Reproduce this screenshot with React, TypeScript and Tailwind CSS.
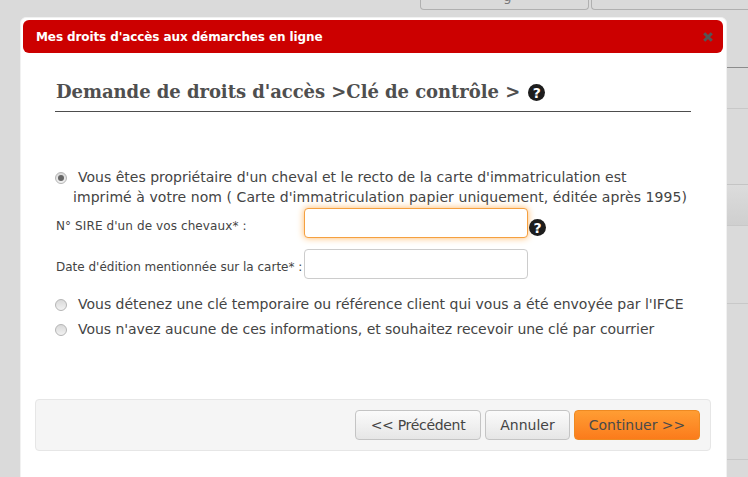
const bodyFont = "font-['DejaVu_Sans',Verdana,sans-serif]";

function HelpIcon() {
  return (
    <span className="flex h-[17px] w-[17px] shrink-0 items-center justify-center rounded-full bg-[#1d1d1d] font-['DejaVu_Sans',sans-serif] text-[14px] leading-none font-bold text-white">
      ?
    </span>
  );
}

function Radio({ checked = false }: { checked?: boolean }) {
  return (
    <span className="flex h-3 w-3 shrink-0 items-center justify-center rounded-full border border-[#b5b5b5] bg-gradient-to-b from-[#d9d9d9] to-[#f2f2f2]">
      {checked && <span className="h-1.5 w-1.5 rounded-full bg-[#666]" />}
    </span>
  );
}

function Backdrop() {
  return (
    <div className="h-[477px] w-[748px] overflow-hidden bg-[#dadada]">
      <div className="flex h-[10px] justify-end gap-[2px]">
        <div className="flex h-[10px] w-[169px] justify-center overflow-hidden rounded-b border border-t-0 border-[#b0b0b0] pl-[6px] text-[13px] leading-none text-[#777]">
          <span className="-mt-[10px]">g</span>
        </div>
        <div className="h-[10px] w-[157px] rounded-bl border border-t-0 border-r-0 border-[#b0b0b0]" />
      </div>
      <div className="ml-auto w-[21px]">
        <div className="mt-[57px] h-[41px] border-t border-[#8c8c8c]" />
        <div className="h-[76px] border-t border-[#c8c8c8]" />
        <div className="h-[41px] border-t border-[#c4c4c4] bg-gradient-to-b from-[#dcdcdc] to-[#cfcfcf]" />
        <div className="h-[78px] border-t border-[#c8c8c8]" />
        <div className="h-[156px] border-t border-[#c8c8c8]" />
        <div className="border-t border-[#c8c8c8]" />
      </div>
    </div>
  );
}

export default function App() {
  return (
    <div className={`relative h-[477px] w-[748px] overflow-hidden ${bodyFont}`}>
      <Backdrop />

      {/* modal */}
      <div className="absolute top-[17px] left-[20px] h-[470px] w-[707px] rounded-t-md border border-[#f1f1f1] bg-white pt-[2px] pr-[3px] pl-[2px]">
        <div className="flex h-[33px] items-center justify-between rounded-md bg-[#cc0000] pr-[10px] pl-[13px]">
          <span className="text-[12px] font-bold tracking-[-0.1px] text-white">Mes droits d'accès aux démarches en ligne</span>
          <svg width="10" height="10" viewBox="0 0 10 10" className="mt-[1px]">
            <path d="M1.2 1.2 8.8 8.8M8.8 1.2 1.2 8.8" stroke="#555" strokeWidth="3" />
          </svg>
        </div>

        <div className="mx-[32px] mt-[24px] flex h-[35px] items-start gap-[8px] border-b border-[#4d4d4d] pt-[2px] pl-[1px] font-['DejaVu_Serif',Georgia,serif] text-[18px] leading-[26px] font-bold tracking-[-0.05px] text-[#4f4f4f]">
          <span>Demande de droits d'accès &gt;Clé de contrôle &gt;</span>
          <span className="mt-[5px]">
            <HelpIcon />
          </span>
        </div>

        <div className="mt-[55px] ml-[32px] text-[14px] text-[#444]">
          <div className="flex items-start gap-[11px] leading-[20px]">
            <span className="mt-[5px]">
              <Radio checked />
            </span>
            <span>Vous êtes propriétaire d'un cheval et le recto de la carte d'immatriculation est</span>
          </div>
          <div className="ml-[18px] leading-[20px] tracking-[0.07px]">
            imprimé à votre nom ( Carte d'immatriculation papier uniquement, éditée après 1995)
          </div>

          <div className="mt-[1px] flex items-center text-[12px]">
            <label className="mt-[5px] ml-[1px] w-[248px] tracking-[0.1px]">N° SIRE d'un de vos chevaux* :</label>
            <input className="h-[30px] w-[224px] rounded border border-[#f5a040] bg-white shadow-[0_0_7px_#ffb866] outline-none" />
            <span className="mt-[9px] ml-[1px]">
              <HelpIcon />
            </span>
          </div>
          <div className="mt-[11px] flex items-center text-[12px]">
            <label className="mt-[5px] ml-[1px] w-[248px]">Date d'édition mentionnée sur la carte* :</label>
            <input className="h-[30px] w-[224px] rounded border border-[#cccccc] bg-white outline-none" />
          </div>

          <div className="mt-[15px] flex items-center gap-[11px] leading-[21px]">
            <Radio />
            <span className="tracking-[-0.01px]">Vous détenez une clé temporaire ou référence client qui vous a été envoyée par l'IFCE</span>
          </div>
          <div className="mt-[4px] flex items-center gap-[11px] leading-[21px]">
            <Radio />
            <span className="tracking-[-0.05px]">Vous n'avez aucune de ces informations, et souhaitez recevoir une clé par courrier</span>
          </div>
        </div>

        <div className="mt-[59px] ml-[12px] flex h-[52px] w-[676px] items-center justify-end gap-[4px] rounded border border-[#e6e6e6] bg-[#f5f5f5] pr-[10px] text-[14px]">
          <button className="h-[30px] w-[126px] rounded border border-[#c4c4c4] bg-gradient-to-b from-[#fbfbfb] to-[#e6e6e6] tracking-[-0.3px] text-[#444]">
            &lt;&lt; Précédent
          </button>
          <button className="h-[30px] w-[85px] rounded border border-[#c4c4c4] bg-gradient-to-b from-[#fbfbfb] to-[#e6e6e6] text-[#444]">
            Annuler
          </button>
          <button className="h-[30px] w-[126px] rounded border border-[#ee8a22] bg-gradient-to-b from-[#ff9d33] to-[#fb7b1b] text-[#4a4a4a]">
            Continuer &gt;&gt;
          </button>
        </div>
      </div>
    </div>
  );
}
